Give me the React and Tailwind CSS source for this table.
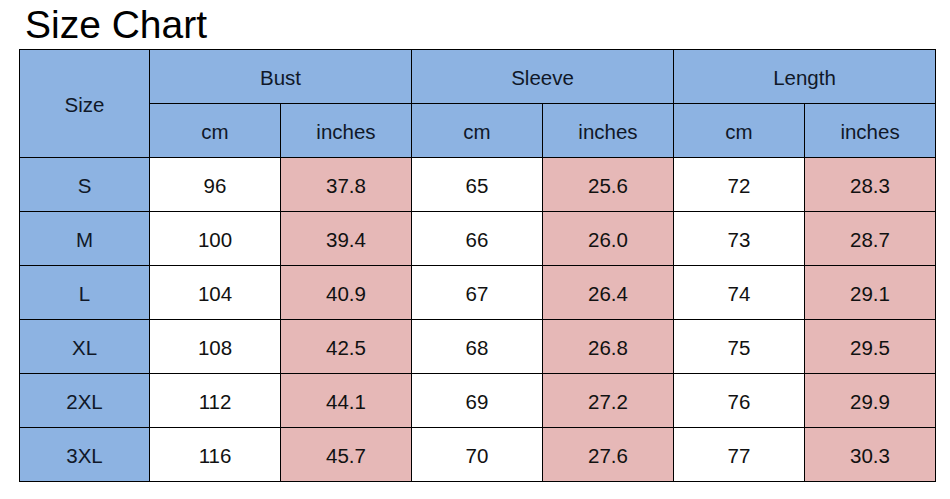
const rows = [
  ["S", "96", "37.8", "65", "25.6", "72", "28.3"],
  ["M", "100", "39.4", "66", "26.0", "73", "28.7"],
  ["L", "104", "40.9", "67", "26.4", "74", "29.1"],
  ["XL", "108", "42.5", "68", "26.8", "75", "29.5"],
  ["2XL", "112", "44.1", "69", "27.2", "76", "29.9"],
  ["3XL", "116", "45.7", "70", "27.6", "77", "30.3"],
];

export default function App() {
  const cell = "border border-black text-center align-middle pt-[4px] p-0";
  return (
    <div className="w-[950px] h-[499px] bg-white font-['Liberation_Sans',Arial,sans-serif] text-[#111]">
      <h1 className="h-[49px] pl-[25px] pt-[3px] text-[39px] leading-[44px] text-black">Size Chart</h1>
      <table className="ml-[19px] w-[917px] table-fixed border-collapse text-[20.5px]">
        <colgroup>
          <col className="w-[130px]" />
          <col className="w-[131px]" />
          <col className="w-[131px]" />
          <col className="w-[131px]" />
          <col className="w-[131px]" />
          <col className="w-[131px]" />
          <col className="w-[131px]" />
        </colgroup>
        <thead>
          <tr className="h-[54px] bg-[#8db3e2] text-[#101828]">
            <th rowSpan={2} className={cell + " font-normal"}>Size</th>
            <th colSpan={2} className={cell + " font-normal"}>Bust</th>
            <th colSpan={2} className={cell + " font-normal"}>Sleeve</th>
            <th colSpan={2} className={cell + " font-normal"}>Length</th>
          </tr>
          <tr className="h-[54px] bg-[#8db3e2] text-[#101828]">
            {["cm", "inches", "cm", "inches", "cm", "inches"].map((u, i) => (
              <th key={i} className={cell + " font-normal"}>{u}</th>
            ))}
          </tr>
        </thead>
        <tbody>
          {rows.map((r) => (
            <tr key={r[0]} className="h-[54px]">
              {r.map((v, i) => (
                <td
                  key={i}
                  className={
                    cell +
                    (i === 0 ? " bg-[#8db3e2] text-[#101828]" : i % 2 === 0 ? " bg-[#e6b8b7]" : " bg-white")
                  }
                >
                  {v}
                </td>
              ))}
            </tr>
          ))}
        </tbody>
      </table>
    </div>
  );
}
